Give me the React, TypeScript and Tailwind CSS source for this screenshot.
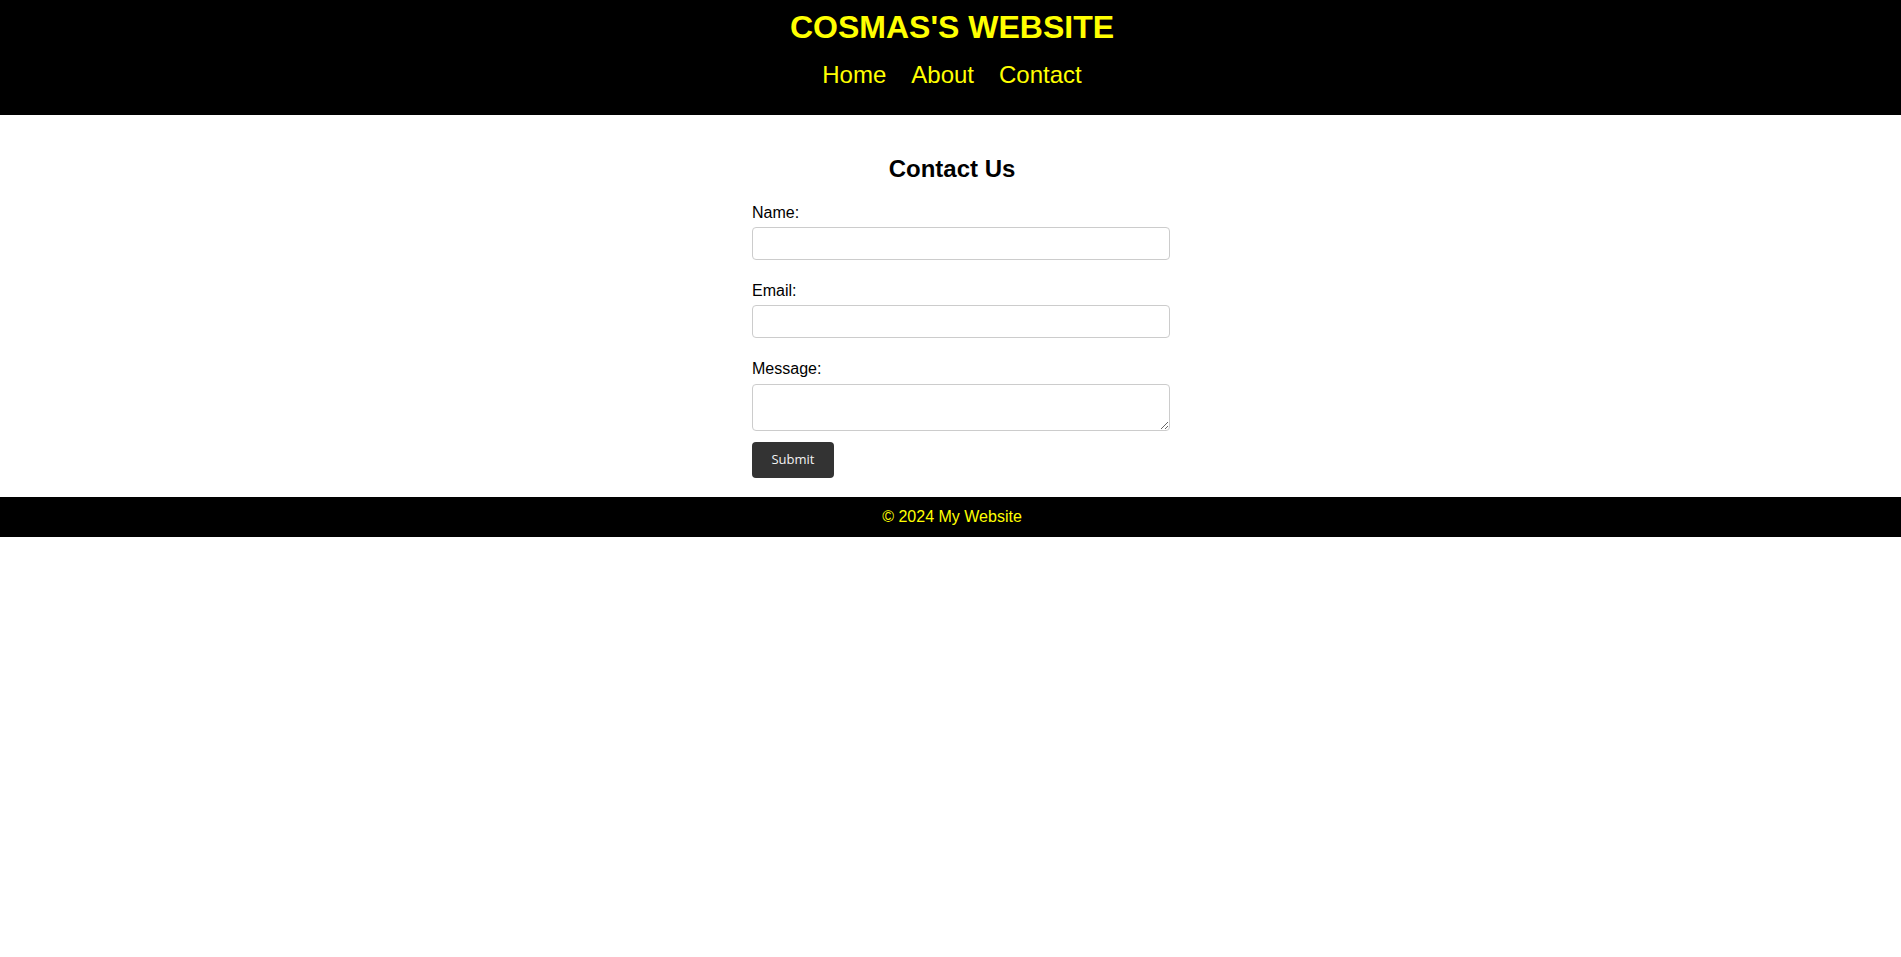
import React from "react"

const fields = [
  { id: "name", label: "Name:", type: "text" },
  { id: "email", label: "Email:", type: "email" },
]

export default function App() {
  return (
    <div className="min-h-screen bg-white font-['Liberation_Sans',Arial,sans-serif] text-black">
      <header className="h-[115px] bg-black pt-[9px] pl-[3px] text-center">
        <h1 className="text-[32px] font-bold leading-[37px] text-[#ffff00]">COSMAS'S WEBSITE</h1>
        <nav className="mt-[15px] flex justify-center gap-[25px] text-[24px] leading-[28px] text-[#ffff00]">
          <a href="#">Home</a>
          <a href="#">About</a>
          <a href="#">Contact</a>
        </nav>
      </header>

      <div className="pl-[3px]">
        <main className="mx-auto w-[400px] pt-10 pb-[19px]">
          <h2 className="mb-5 text-center text-[24px] font-bold leading-[28px]">Contact Us</h2>
          <form onSubmit={(e) => e.preventDefault()}>
            {fields.map((f) => (
              <div key={f.id}>
                <label htmlFor={f.id} className="mb-[5px] block pt-[1px] text-[16px] leading-[18px]">
                  {f.label}
                </label>
                <input
                  id={f.id}
                  type={f.type}
                  className="mb-[21px] block h-[33px] w-[418px] rounded-[4px] border border-[#cccccc] px-2 text-[13px]"
                />
              </div>
            ))}
            <label htmlFor="message" className="mb-[6px] block pt-[1px] text-[16px] leading-[18px]">
              Message:
            </label>
            <textarea
              id="message"
              className="block h-[47px] w-[418px] rounded-[4px] border border-[#cccccc] px-2 py-2 text-[13px]"
            />
            <button
              type="submit"
              className="mt-[11px] h-[36px] w-[82px] rounded-[4px] bg-[#333333] font-['Open_Sans',sans-serif] text-[13px] text-[#f2f2f2]"
            >
              Submit
            </button>
          </form>
        </main>
      </div>

      <footer className="h-10 bg-black pl-[3px] text-center text-[16px] leading-10 text-[#ffff00]">© 2024 My Website</footer>
    </div>
  )
}
